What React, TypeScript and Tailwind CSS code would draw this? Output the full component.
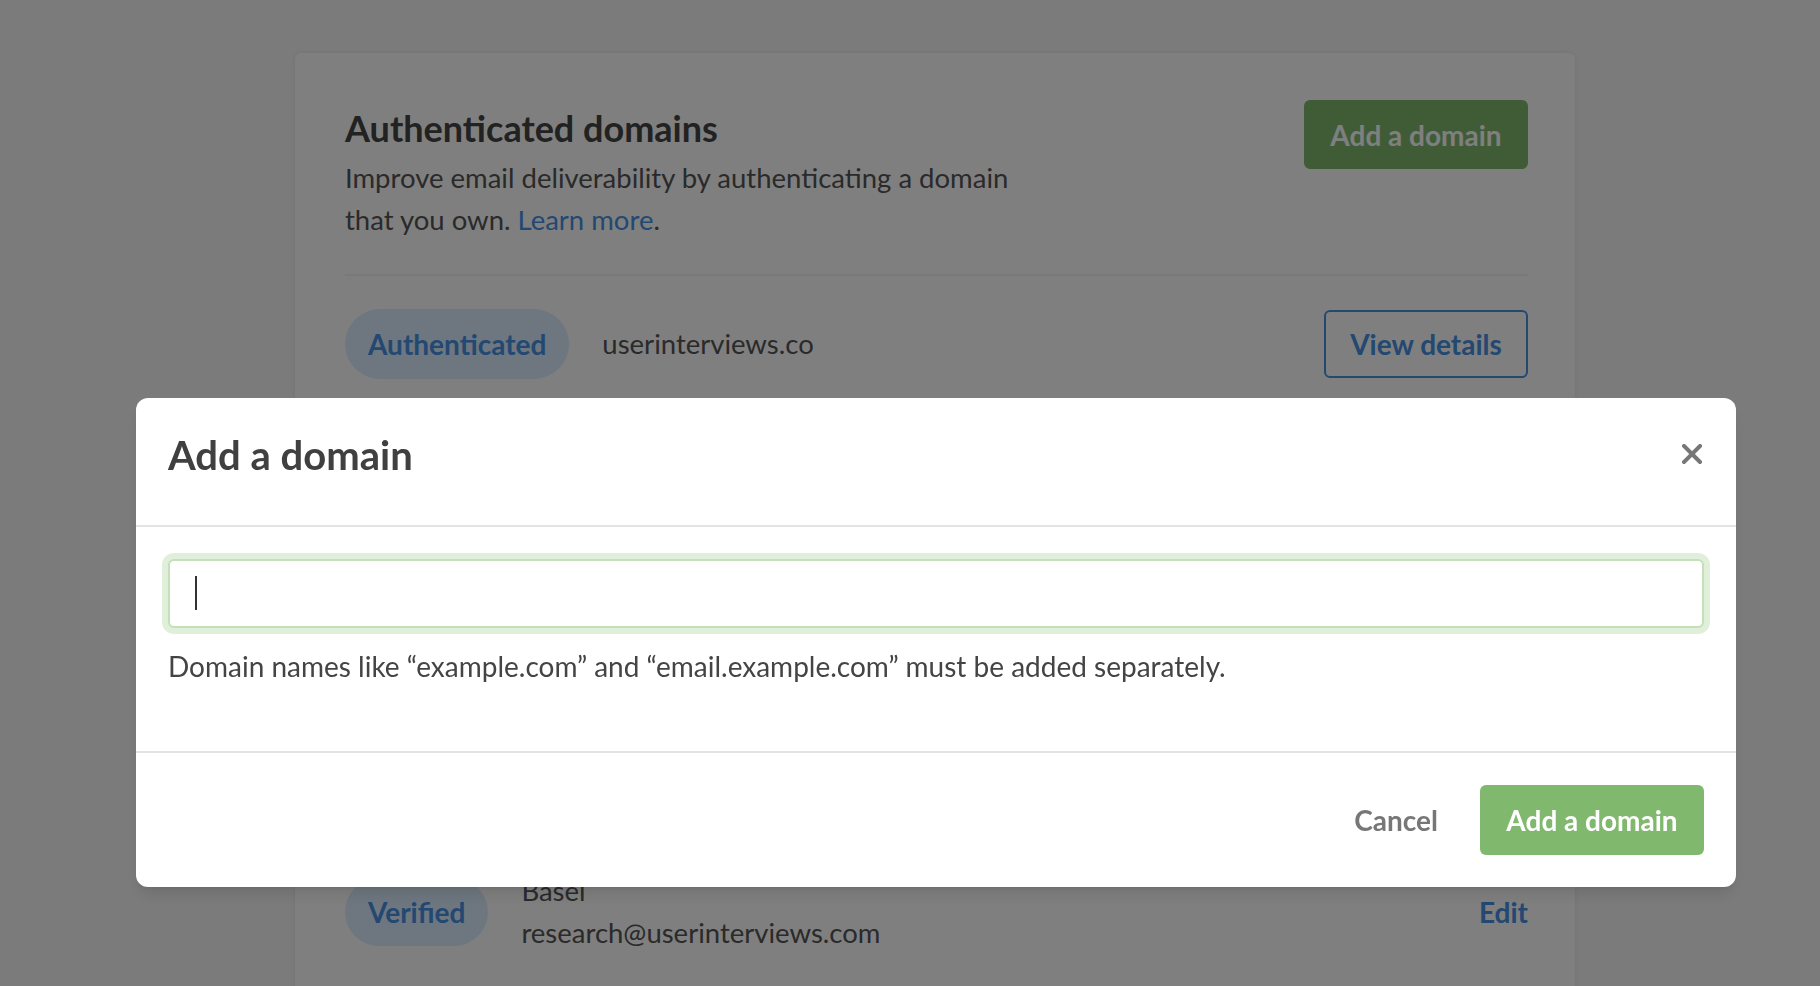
const domains = [{ status: 'Authenticated', name: 'userinterviews.co' }]

function Pill({ label }: { label: string }) {
  return (
    <span className="inline-flex items-center h-[70px] px-[23px] rounded-full bg-[#dceeff] text-[28px] font-bold text-[#4690e4]">
      {label}
    </span>
  )
}

function Background() {
  return (
    <div className="pl-[295px] pt-[53px]">
      <div className="w-[1280px] min-h-[960px] bg-white rounded-t-md shadow-[0_0_4px_rgba(0,0,0,0.08)] pl-[50px] pr-[47px] pt-[47px]">
        <div className="flex items-start justify-between">
          <div className="max-w-[680px]">
            <h2 className="text-[36px] leading-[57px] font-bold text-[#444]">Authenticated domains</h2>
            <p className="text-[27.5px] leading-[42px] text-[#555]">
              Improve email deliverability by authenticating a domain that you own.{' '}
              <a className="text-[#4690e4]">Learn more</a>.
            </p>
          </div>
          <button className="h-[69px] w-[224px] rounded-md bg-[#80b96e] text-[28px] font-bold text-white">
            Add a domain
          </button>
        </div>
        <div className="mt-[33px] h-[2px] bg-[#f2f2f2]" />
        {domains.map((d) => (
          <div key={d.name} className="mt-[33px] flex items-center justify-between">
            <div className="flex items-center gap-[33px]">
              <Pill label={d.status} />
              <span className="text-[27.5px] text-[#555]">{d.name}</span>
            </div>
            <button className="h-[68px] w-[204px] rounded-md border-2 border-[#4690e4] text-[28px] font-bold text-[#4690e4]">
              View details
            </button>
          </div>
        ))}
        <div className="mt-[33px] h-[2px] bg-[#f2f2f2]" />

        <div className="pt-[96px] flex items-start justify-between">
          <div className="max-w-[680px]">
            <h2 className="text-[36px] leading-[57px] font-bold text-[#444]">Sender identities</h2>
            <p className="text-[27.5px] leading-[42px] text-[#555]">
              Choose the names and addresses that participants see in your emails.
            </p>
          </div>
          <button className="h-[69px] w-[224px] rounded-md bg-[#80b96e] text-[28px] font-bold text-white">
            Add a sender
          </button>
        </div>
        <div className="mt-[33px] h-[2px] bg-[#f2f2f2]" />
        <div className="mt-[33px] flex items-center justify-between">
          <div className="flex items-center gap-[33px]">
            <Pill label="Pending" />
            <div className="text-[27.5px] leading-[42px] text-[#555]">
              <div>User Interviews</div>
              <div>hello@userinterviews.com</div>
            </div>
          </div>
          <span className="text-[28px] font-bold text-[#4690e4]">Edit</span>
        </div>
        <div className="mt-[33px] h-[2px] bg-[#f2f2f2]" />
        <div className="mt-[32px] flex items-center justify-between">
          <div className="flex items-center gap-[33px]">
            <span className="inline-flex items-center h-[68px] px-[23px] rounded-full bg-[#dceeff] text-[28px] font-bold text-[#4690e4]">
              Verified
            </span>
            <div className="text-[27.5px] leading-[42px] text-[#555]">
              <div>Basel</div>
              <div>research@userinterviews.com</div>
            </div>
          </div>
          <span className="text-[28px] font-bold text-[#4690e4]">Edit</span>
        </div>
      </div>
    </div>
  )
}

function AddDomainModal() {
  return (
    <div className="fixed inset-0 bg-black/50">
      <div className="ml-[136px] mt-[398px] w-[1600px] rounded-xl bg-white shadow-lg">
        <div className="flex items-start justify-between px-[32px] pt-[34px] pb-[47px]">
          <h1 className="text-[40px] leading-[46px] font-bold text-[#404040]">Add a domain</h1>
          <button className="mt-[12px] mr-[2px] text-[#777]" aria-label="Close">
            <svg width="20" height="20" viewBox="0 0 20 20">
              <path d="M2 2 L18 18 M18 2 L2 18" stroke="currentColor" strokeWidth="4" strokeLinecap="square" />
            </svg>
          </button>
        </div>
        <div className="h-[2px] bg-[#e3e3e3]" />
        <div className="px-[32px] pt-[32px] pb-[67px]">
          <div className="relative">
            <input
              readOnly
              className="block w-full h-[69px] rounded-md border-2 border-[#c5dfbb] bg-white px-[25px] text-[28px] caret-transparent outline-none shadow-[0_0_0_6px_#e0efda]"
            />
            <span className="absolute left-[27px] top-[17px] h-[34px] w-[2px] bg-[#333]" />
          </div>
          <p className="mt-[20px] text-[28px] leading-[36px] text-[#444]">
            Domain names like “example.com” and “email.example.com” must be added separately.
          </p>
        </div>
        <div className="h-[2px] bg-[#e3e3e3]" />
        <div className="flex items-center justify-end gap-[42px] px-[32px] pt-[32px] pb-[32px]">
          <button className="text-[28px] font-bold text-[#777]">Cancel</button>
          <button className="h-[70px] w-[224px] rounded-md bg-[#80b96e] text-[28px] font-bold text-white">
            Add a domain
          </button>
        </div>
      </div>
    </div>
  )
}

export default function App() {
  return (
    <div className="relative h-[986px] overflow-hidden bg-[#f6f6f6] font-['Lato',sans-serif]">
      <Background />
      <AddDomainModal />
    </div>
  )
}
